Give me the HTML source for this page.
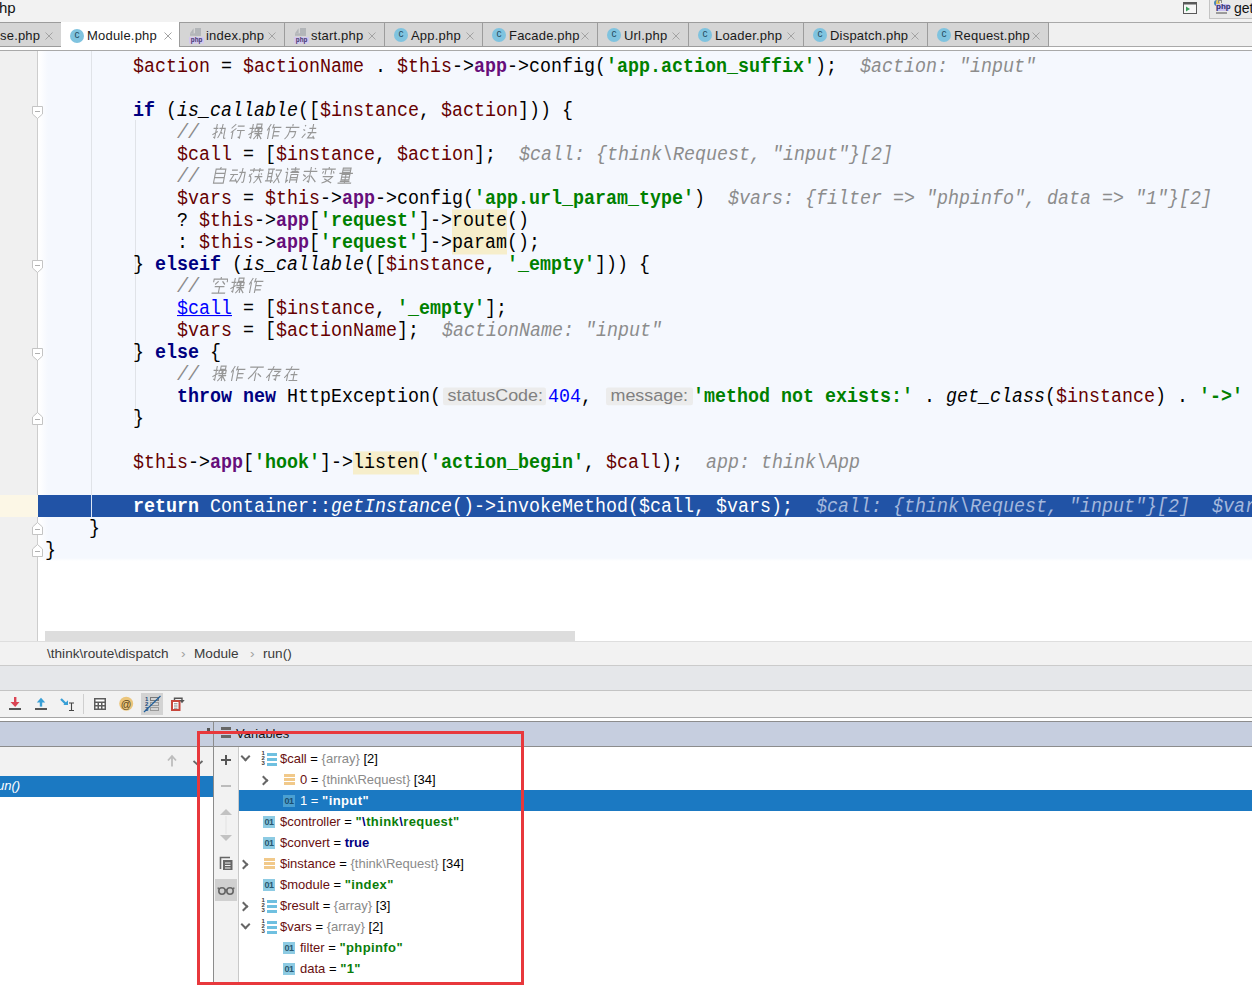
<!DOCTYPE html>
<html><head><meta charset="utf-8">
<style>
*{margin:0;padding:0;box-sizing:border-box}
html,body{width:1252px;height:985px;overflow:hidden;background:#fff;font-family:"Liberation Sans",sans-serif}
.abs{position:absolute}
#top{position:absolute;left:0;top:0;width:1252px;height:22px;background:#f2f2f2}
#tabbar{position:absolute;left:0;top:22px;width:1252px;height:25px;background:#f0f0f0;border-top:1px solid #a9a9a9;border-bottom:1px solid #a9a9a9}
#tabstrip{position:absolute;left:0;top:47px;width:1252px;height:3px;background:#fff}
#tabline{position:absolute;left:0;top:50px;width:1252px;height:1px;background:#a9a9a9}
.tab{position:absolute;top:-1px;height:25px;background:#d5d5d5;border:1px solid #9c9c9c}
.tab.act{background:#fff;border:none;height:28px;top:-1px}
.tab.act .ci{top:7px;left:9px}
.tab.act .tl{top:6px}
.tab.first{border-left:none}
.tl{position:absolute;top:5px;font-size:13px;color:#1a1a1a;white-space:nowrap;letter-spacing:0.2px}
.txs{position:absolute;top:9px;right:8px}
.tab.act .txs{top:10px;right:8px}
.ci{position:absolute;left:9px;top:5px;width:14px;height:14px;border-radius:50%;background:#7fc3df;color:#1f4a5e;font-size:10px;line-height:12px;text-align:center}
.phpi{position:absolute;left:9px;top:5px}
.phpi .pg{position:absolute;left:4px;top:0;width:9px;height:8px;background:#bcbcbc}
.phpi .pt{position:absolute;left:0;top:9px;width:16px;height:7px;background:#cbbbe8;color:#4d3a8a;font-size:7px;line-height:7px;font-weight:bold;text-align:center}
#editor{position:absolute;left:0;top:51px;width:1252px;height:590px;background:#fff;overflow:hidden}
#gutter{position:absolute;left:0;top:51px;width:38px;height:590px;background:#f0f0f0;border-right:1px solid #cdcdcd}
#codebg{position:absolute;left:39px;top:51px;width:1213px;height:510px;background:linear-gradient(to right,#fff 0,#f5f8fe 9px);}
#codebg:after{content:'';position:absolute;left:0;right:0;bottom:0;height:3px;background:linear-gradient(to bottom,rgba(255,255,255,0),#fff)}
#code{position:absolute;left:0;top:51px;width:1252px;height:590px;overflow:hidden}
#code .inner{position:absolute;left:0;top:-51px}
.ln{position:absolute;height:22px;line-height:22px;white-space:pre;transform:scaleY(1.1);transform-origin:0 16px;font-family:"Liberation Mono",monospace;font-size:18.33px;color:#000}
.ln.sel{color:#fff}
.v{color:#660000}.f{color:#660e7a;font-weight:bold}.s{color:#008000;font-weight:bold}.k{color:#000080;font-weight:bold}
.n{color:#0000ff}.c{color:#8a8a8a;font-style:italic}.i{font-style:italic}.h{color:#8c8c8c;font-style:italic;margin-left:1px}
.u{color:#0000ff;text-decoration:underline}
.hl{background:#f6eecb}
.cjs{display:inline-block;vertical-align:-2px}
.cjx{display:inline-block;width:18px;font-family:"Liberation Sans",sans-serif;font-size:15px;color:#a3a3a3;transform:scaleX(1.15) scaleY(1.05)}
.pb{display:inline-block;position:relative;height:16.3px;vertical-align:top;margin-top:1.7px;background:#ececec;border-radius:2px}
.pbt{position:absolute;left:4.5px;top:0.9px;font-family:"Liberation Sans",sans-serif;font-size:17.9px;line-height:17.9px;color:#808080;transform:scaleY(0.83);transform-origin:0 0;white-space:nowrap}
.sel .v,.sel .k,.sel .s,.sel .i{color:#fff}
.sel .h{color:#a4b8dd}
#selrow{position:absolute;left:38px;top:495px;width:1214px;height:22px;background:#2153a6}
#gsel{position:absolute;left:0;top:495px;width:38px;height:22px;background:#fcf7e6}
.guide{position:absolute;width:1px;background:#e0e3e8}
.fold{position:absolute;left:32px;width:11px;height:13px}
#hscroll{position:absolute;left:45px;top:631px;width:530px;height:10px;background:#dddddd}
#crumb{position:absolute;left:0;top:641px;width:1252px;height:25px;background:#f2f2f2;border-bottom:1px solid #cbcbcb;font-size:13.6px;color:#3a3a3a}
#crumb span{position:absolute;top:5px}
#graybar{position:absolute;left:0;top:666px;width:1252px;height:25px;background:#e5e7ea;border-bottom:1px solid #c4c4c4}
#toolbar{position:absolute;left:0;top:691px;width:1252px;height:27px;background:#f2f2f2;border-bottom:1px solid #a6a6a6}
#tbline{position:absolute;left:0;top:721px;width:1252px;height:1px;background:#8c8c8c}
#phead{position:absolute;left:0;top:722px;width:1252px;height:25px;background:#c6cedf;border-bottom:1px solid #8c8c8c}
#frames{position:absolute;left:0;top:747px;width:213px;height:238px;background:#fff}
#ftool{position:absolute;left:0;top:747px;width:213px;height:29px;background:#f2f2f2}
#fsel{position:absolute;left:0;top:776px;width:213px;height:21px;background:#1b79c2}
#vdiv{position:absolute;left:213px;top:722px;width:1px;height:263px;background:#8c8c8c}
#vtool{position:absolute;left:214px;top:747px;width:25px;height:238px;background:#f2f2f2;border-right:1px solid #c9c9c9}
.vr{position:absolute;left:239px;width:1013px;height:21px;font-size:13px;line-height:21px;color:#000}
.vr.sel{background:#1b79c2}
.vt{position:absolute;top:0;white-space:pre}
.vn{color:#680f0f}.vg{color:#8a8a8a}.vs{color:#0a7d0a;font-weight:bold;letter-spacing:0.4px}.vk{color:#000080;font-weight:bold}
.sel .vn,.sel .vs,.sel .vt,.sel .vk{color:#fff}
.i01{position:absolute;top:5px;width:12px;height:12px;background:#8dcbe3;color:#2a5870;font-size:9px;line-height:12px;text-align:center;font-weight:bold;letter-spacing:-0.5px}
.sel .i01{background:#4aa0d2;color:#1b4d6e}
.iarr{position:absolute;top:4px;width:16px;height:15px}
.iarr i{position:absolute;left:-0.5px;top:-1px;font-style:normal;font-size:6px;line-height:4.8px;color:#3a3a3a;font-weight:bold}
.iarr b{position:absolute;left:5px;width:10px;height:3px;background:#6fc0e0}
.iarr b:nth-of-type(1){top:1px}.iarr b:nth-of-type(2){top:6px}.iarr b:nth-of-type(3){top:11px}
.iobj{position:absolute;top:5px;width:11px;height:13px}
.iobj b{position:absolute;left:0;width:11px;height:3px;background:#f1c98a}
.iobj b:nth-of-type(1){top:0}.iobj b:nth-of-type(2){top:4px}.iobj b:nth-of-type(3){top:8px}
.chev{position:absolute;width:7px;height:7px;border-right:2px solid #666;border-bottom:2px solid #666}
.chev.d{transform:rotate(45deg);top:5px}
.chev.r{transform:rotate(-45deg);top:8px}
#redbox{position:absolute;left:197px;top:731px;width:327px;height:254px;border:3px solid #e8383c}
</style></head><body>
<div id="top">
  <span class="abs" style="left:-1px;top:-1px;font-size:15px;color:#111">hp</span>
  <svg class="abs" style="left:1183px;top:2px" width="14" height="12" viewBox="0 0 14 12"><rect x="0.5" y="0.5" width="13" height="11" fill="#f7f7f7" stroke="#5a5a5a"/><rect x="0" y="0" width="14" height="2.5" fill="#5a5a5a"/><path d="M3 4.5L7 7L3 9.5Z" fill="#3aa05a"/></svg>
  <div class="abs" style="left:1209px;top:-1px;width:45px;height:20px;background:#e9e9e9;border:1px solid #c4c4c4">
    <span class="abs" style="left:4px;top:0px;width:6px;height:6px;border-radius:3px;background:#e6c65a;border-left:2px solid #4a86b8"></span>
    <span class="abs" style="left:8px;top:0px;width:4px;height:3px;border:1px solid #8a8a8a;border-bottom:none"></span>
    <span class="abs" style="left:6px;top:4px;width:13px;height:7px;background:#c9bff0"></span>
    <span class="abs" style="left:6px;top:3px;width:13px;font-size:8px;line-height:8px;font-weight:bold;color:#2c2a6a;text-align:center">php</span>
    <span class="abs" style="left:6px;top:12px;width:11px;height:2px;background:#9a9a9a"></span>
    <span class="abs" style="left:24px;top:0px;font-size:14px;color:#111">get</span>
  </div>
</div>
<div id="tabbar">
<div class="tab first" style="left:0px;width:62px"><span class="tl" style="left:0px">se.php</span><svg class="txs" width="8" height="8" viewBox="0 0 8 8"><path d="M0.5 0.5L7.5 7.5M7.5 0.5L0.5 7.5" stroke="#a3a3a3" stroke-width="1"/></svg></div>
<div class="tab act" style="left:61px;width:119px"><span class="ci">c</span><span class="tl" style="left:26px">Module.php</span><svg class="txs" width="8" height="8" viewBox="0 0 8 8"><path d="M0.5 0.5L7.5 7.5M7.5 0.5L0.5 7.5" stroke="#a3a3a3" stroke-width="1"/></svg></div>
<div class="tab" style="left:179px;width:106px"><svg class="phpi" width="16" height="17" viewBox="0 0 16 17"><path d="M1 5.2L4.6 0.3V5.2Z" fill="#b3b6b9"/><rect x="6" y="0" width="6" height="7.8" fill="#b3b6b9"/><rect x="1" y="5.3" width="11" height="2.5" fill="#b3b6b9"/><rect x="0" y="9" width="15" height="6.5" fill="#d3c8ee"/><text x="1.8" y="13.9" textLength="11.5" lengthAdjust="spacingAndGlyphs" font-family="Liberation Sans" font-size="7.6" font-weight="bold" fill="#3f3470">php</text></svg><span class="tl" style="left:26px">index.php</span><svg class="txs" width="8" height="8" viewBox="0 0 8 8"><path d="M0.5 0.5L7.5 7.5M7.5 0.5L0.5 7.5" stroke="#a3a3a3" stroke-width="1"/></svg></div>
<div class="tab" style="left:284px;width:101px"><svg class="phpi" width="16" height="17" viewBox="0 0 16 17"><path d="M1 5.2L4.6 0.3V5.2Z" fill="#b3b6b9"/><rect x="6" y="0" width="6" height="7.8" fill="#b3b6b9"/><rect x="1" y="5.3" width="11" height="2.5" fill="#b3b6b9"/><rect x="0" y="9" width="15" height="6.5" fill="#d3c8ee"/><text x="1.8" y="13.9" textLength="11.5" lengthAdjust="spacingAndGlyphs" font-family="Liberation Sans" font-size="7.6" font-weight="bold" fill="#3f3470">php</text></svg><span class="tl" style="left:26px">start.php</span><svg class="txs" width="8" height="8" viewBox="0 0 8 8"><path d="M0.5 0.5L7.5 7.5M7.5 0.5L0.5 7.5" stroke="#a3a3a3" stroke-width="1"/></svg></div>
<div class="tab" style="left:384px;width:99px"><span class="ci">c</span><span class="tl" style="left:26px">App.php</span><svg class="txs" width="8" height="8" viewBox="0 0 8 8"><path d="M0.5 0.5L7.5 7.5M7.5 0.5L0.5 7.5" stroke="#a3a3a3" stroke-width="1"/></svg></div>
<div class="tab" style="left:482px;width:116px"><span class="ci">c</span><span class="tl" style="left:26px">Facade.php</span><svg class="txs" width="8" height="8" viewBox="0 0 8 8"><path d="M0.5 0.5L7.5 7.5M7.5 0.5L0.5 7.5" stroke="#a3a3a3" stroke-width="1"/></svg></div>
<div class="tab" style="left:597px;width:92px"><span class="ci">c</span><span class="tl" style="left:26px">Url.php</span><svg class="txs" width="8" height="8" viewBox="0 0 8 8"><path d="M0.5 0.5L7.5 7.5M7.5 0.5L0.5 7.5" stroke="#a3a3a3" stroke-width="1"/></svg></div>
<div class="tab" style="left:688px;width:116px"><span class="ci">c</span><span class="tl" style="left:26px">Loader.php</span><svg class="txs" width="8" height="8" viewBox="0 0 8 8"><path d="M0.5 0.5L7.5 7.5M7.5 0.5L0.5 7.5" stroke="#a3a3a3" stroke-width="1"/></svg></div>
<div class="tab" style="left:803px;width:125px"><span class="ci">c</span><span class="tl" style="left:26px">Dispatch.php</span><svg class="txs" width="8" height="8" viewBox="0 0 8 8"><path d="M0.5 0.5L7.5 7.5M7.5 0.5L0.5 7.5" stroke="#a3a3a3" stroke-width="1"/></svg></div>
<div class="tab" style="left:927px;width:122px"><span class="ci">c</span><span class="tl" style="left:26px">Request.php</span><svg class="txs" width="8" height="8" viewBox="0 0 8 8"><path d="M0.5 0.5L7.5 7.5M7.5 0.5L0.5 7.5" stroke="#a3a3a3" stroke-width="1"/></svg></div>

</div>
<div id="tabstrip"></div>
<div id="tabline"></div>
<div id="editor"></div>
<div id="gutter"></div>
<div id="codebg"></div>
<div id="gsel"></div>
<div id="selrow"></div>
<div class="guide" style="left:91px;top:51px;height:466px"></div>
<div class="guide" style="left:135px;top:120px;height:301px"></div>
<div class="abs" style="left:91px;top:495px;width:1px;height:22px;background:#dce6f5"></div>
<div id="code"><div class="inner">
<div class="ln" style="top:57px;left:133px"><span class="v">$action</span> = <span class="v">$actionName</span> . <span class="v">$this</span>-&gt;<span class="f">app</span>-&gt;config(<span class="s">'app.action_suffix'</span>);<span class="h">  $action: "input"</span></div>
<div class="ln" style="top:101px;left:133px"><span class="k">if</span> (<span class="i">is_callable</span>([<span class="v">$instance</span>, <span class="v">$action</span>])) {</div>
<div class="ln" style="top:123px;left:133px"><span class="c">    // <svg class="cjs" width="18" height="16" viewBox="-1 -0.5 18 16.5"><path d="M1 5H6 M4 1V14L2.5 13 M1 11L6 8 M7 5H13V13Q13 15 15 14 M10 1Q10 9 7 14 M9 8L11 10" transform="skewX(-12) translate(2.5 0)" stroke="#979797" stroke-width="1.15" fill="none"/></svg><svg class="cjs" width="18" height="16" viewBox="-1 -0.5 18 16.5"><path d="M5 1L1 5 M6 5L1 9 M3 7V15 M7 3H14 M7 7H15 M11 7V14L9 13" transform="skewX(-12) translate(2.5 0)" stroke="#979797" stroke-width="1.15" fill="none"/></svg><svg class="cjs" width="18" height="16" viewBox="-1 -0.5 18 16.5"><path d="M1 5H6 M4 1V14L2.5 13 M1 11L6 8 M8 1H13V4H8Z M7 5H10V8H7Z M11 5H14V8H11Z M7 10H15 M11 8V15 M11 10L7 15 M11 10L15 15" transform="skewX(-12) translate(2.5 0)" stroke="#979797" stroke-width="1.15" fill="none"/></svg><svg class="cjs" width="18" height="16" viewBox="-1 -0.5 18 16.5"><path d="M4 1L1 7 M3 5V15 M7 1L6 5 M6 4H15 M8 4V15 M8 8H14 M8 12H14" transform="skewX(-12) translate(2.5 0)" stroke="#979797" stroke-width="1.15" fill="none"/></svg><svg class="cjs" width="18" height="16" viewBox="-1 -0.5 18 16.5"><path d="M8 1V3 M1 4H15 M6 4Q6 12 2 15 M6 8H12Q12 14 9 14" transform="skewX(-12) translate(2.5 0)" stroke="#979797" stroke-width="1.15" fill="none"/></svg><svg class="cjs" width="18" height="16" viewBox="-1 -0.5 18 16.5"><path d="M2 2L3 3 M1 6L3 7 M1 14L4 10 M7 5H14 M10.5 1V9 M6 9H15 M10 9L7 14H14 M12 12L14 15" transform="skewX(-12) translate(2.5 0)" stroke="#979797" stroke-width="1.15" fill="none"/></svg></span></div>
<div class="ln" style="top:145px;left:133px">    <span class="v">$call</span> = [<span class="v">$instance</span>, <span class="v">$action</span>];<span class="h">  $call: {think\Request, "input"}[2]</span></div>
<div class="ln" style="top:167px;left:133px"><span class="c">    // <svg class="cjs" width="18" height="16" viewBox="-1 -0.5 18 16.5"><path d="M8 0L7 2 M3 2H13V15H3Z M3 6H13 M3 10H13" transform="skewX(-12) translate(2.5 0)" stroke="#979797" stroke-width="1.15" fill="none"/></svg><svg class="cjs" width="18" height="16" viewBox="-1 -0.5 18 16.5"><path d="M1 3H7 M0 7H8 M4 7L1 13H7 M6 11L8 14 M9 5H15V13Q15 15 13 14 M12 1Q12 10 8 15" transform="skewX(-12) translate(2.5 0)" stroke="#979797" stroke-width="1.15" fill="none"/></svg><svg class="cjs" width="18" height="16" viewBox="-1 -0.5 18 16.5"><path d="M1 3H15 M5 1V5 M11 1V5 M4 6L1 9 M1 7Q5 10 3 15 M7 9H15 M11 6V9Q10 13 7 15 M11 9L15 15 M13 6L14 7" transform="skewX(-12) translate(2.5 0)" stroke="#979797" stroke-width="1.15" fill="none"/></svg><svg class="cjs" width="18" height="16" viewBox="-1 -0.5 18 16.5"><path d="M1 2H8 M2 2V13 M6 2V15 M2 6H6 M2 9H6 M0 13H8 M9 3H15Q13 10 9 15 M10 6L15 15" transform="skewX(-12) translate(2.5 0)" stroke="#979797" stroke-width="1.15" fill="none"/></svg><svg class="cjs" width="18" height="16" viewBox="-1 -0.5 18 16.5"><path d="M2 1L3 3 M1 5H3V14L5 12 M6 2H15 M10.5 0V5 M7 4H14 M6 5H15 M7 7H14V15 M7 7V15 M7 10H14 M7 12H14" transform="skewX(-12) translate(2.5 0)" stroke="#979797" stroke-width="1.15" fill="none"/></svg><svg class="cjs" width="18" height="16" viewBox="-1 -0.5 18 16.5"><path d="M1 4H15 M8 0V14L6 13 M12 1L13 2 M1 7L4 9 M2 13L7 8 M9 8L15 14" transform="skewX(-12) translate(2.5 0)" stroke="#979797" stroke-width="1.15" fill="none"/></svg><svg class="cjs" width="18" height="16" viewBox="-1 -0.5 18 16.5"><path d="M8 0V2 M1 2H15 M5 2V7 M11 2V7 M3 4L2 6 M13 4L14 6 M3 9H13Q10 13 3 15 M5 11L13 15" transform="skewX(-12) translate(2.5 0)" stroke="#979797" stroke-width="1.15" fill="none"/></svg><svg class="cjs" width="18" height="16" viewBox="-1 -0.5 18 16.5"><path d="M4 1H12V5H4Z M4 3H12 M1 6H15 M4 7H12V12H4Z M4 9.5H12 M8 7V15 M3 13.5H13 M1 15H15" transform="skewX(-12) translate(2.5 0)" stroke="#979797" stroke-width="1.15" fill="none"/></svg></span></div>
<div class="ln" style="top:189px;left:133px">    <span class="v">$vars</span> = <span class="v">$this</span>-&gt;<span class="f">app</span>-&gt;config(<span class="s">'app.url_param_type'</span>)<span class="h">  $vars: {filter =&gt; "phpinfo", data =&gt; "1"}[2]</span></div>
<div class="ln" style="top:211px;left:133px">    ? <span class="v">$this</span>-&gt;<span class="f">app</span>[<span class="s">'request'</span>]-&gt;<span class="hl">route</span>()</div>
<div class="ln" style="top:233px;left:133px">    : <span class="v">$this</span>-&gt;<span class="f">app</span>[<span class="s">'request'</span>]-&gt;<span class="hl">param</span>();</div>
<div class="ln" style="top:255px;left:133px">} <span class="k">elseif</span> (<span class="i">is_callable</span>([<span class="v">$instance</span>, <span class="s">'_empty'</span>])) {</div>
<div class="ln" style="top:277px;left:133px"><span class="c">    // <svg class="cjs" width="18" height="16" viewBox="-1 -0.5 18 16.5"><path d="M8 0V2 M1 5V2H15V5 M6 4L3 7 M10 4L13 7 M3 9H13 M8 9V15 M1 15H15" transform="skewX(-12) translate(2.5 0)" stroke="#979797" stroke-width="1.15" fill="none"/></svg><svg class="cjs" width="18" height="16" viewBox="-1 -0.5 18 16.5"><path d="M1 5H6 M4 1V14L2.5 13 M1 11L6 8 M8 1H13V4H8Z M7 5H10V8H7Z M11 5H14V8H11Z M7 10H15 M11 8V15 M11 10L7 15 M11 10L15 15" transform="skewX(-12) translate(2.5 0)" stroke="#979797" stroke-width="1.15" fill="none"/></svg><svg class="cjs" width="18" height="16" viewBox="-1 -0.5 18 16.5"><path d="M4 1L1 7 M3 5V15 M7 1L6 5 M6 4H15 M8 4V15 M8 8H14 M8 12H14" transform="skewX(-12) translate(2.5 0)" stroke="#979797" stroke-width="1.15" fill="none"/></svg></span></div>
<div class="ln" style="top:299px;left:133px">    <span class="u">$call</span> = [<span class="v">$instance</span>, <span class="s">'_empty'</span>];</div>
<div class="ln" style="top:321px;left:133px">    <span class="v">$vars</span> = [<span class="v">$actionName</span>];<span class="h">  $actionName: "input"</span></div>
<div class="ln" style="top:343px;left:133px">} <span class="k">else</span> {</div>
<div class="ln" style="top:365px;left:133px"><span class="c">    // <svg class="cjs" width="18" height="16" viewBox="-1 -0.5 18 16.5"><path d="M1 5H6 M4 1V14L2.5 13 M1 11L6 8 M8 1H13V4H8Z M7 5H10V8H7Z M11 5H14V8H11Z M7 10H15 M11 8V15 M11 10L7 15 M11 10L15 15" transform="skewX(-12) translate(2.5 0)" stroke="#979797" stroke-width="1.15" fill="none"/></svg><svg class="cjs" width="18" height="16" viewBox="-1 -0.5 18 16.5"><path d="M4 1L1 7 M3 5V15 M7 1L6 5 M6 4H15 M8 4V15 M8 8H14 M8 12H14" transform="skewX(-12) translate(2.5 0)" stroke="#979797" stroke-width="1.15" fill="none"/></svg><svg class="cjs" width="18" height="16" viewBox="-1 -0.5 18 16.5"><path d="M1 2H15 M9 2Q6 9 1 13 M8 7V15 M10 8L14 11" transform="skewX(-12) translate(2.5 0)" stroke="#979797" stroke-width="1.15" fill="none"/></svg><svg class="cjs" width="18" height="16" viewBox="-1 -0.5 18 16.5"><path d="M1 4H15 M7 1Q5 8 1 12 M4 8V15 M8 6H14L11 9V14L9 13 M7 10H15" transform="skewX(-12) translate(2.5 0)" stroke="#979797" stroke-width="1.15" fill="none"/></svg><svg class="cjs" width="18" height="16" viewBox="-1 -0.5 18 16.5"><path d="M1 4H15 M7 1Q5 8 1 12 M4 8V15 M7 9H14 M10.5 6V14 M6 14.5H15" transform="skewX(-12) translate(2.5 0)" stroke="#979797" stroke-width="1.15" fill="none"/></svg></span></div>
<div class="ln" style="top:387px;left:133px">    <span class="k">throw</span> <span class="k">new</span> HttpException(<span class="pb" style="width:103px;margin-left:2px;margin-right:2px"><span class="pbt">statusCode:</span></span><span class="n">404</span>, <span class="pb" style="width:87px;margin-left:3px;margin-right:0px"><span class="pbt">message:</span></span><span class="s">'method not exists:'</span> . <span class="i">get_class</span>(<span class="v">$instance</span>) . <span class="s">'-&gt;'</span> . <span class="v">$action</span>, 404);</div>
<div class="ln" style="top:409px;left:133px">}</div>
<div class="ln" style="top:453px;left:133px"><span class="v">$this</span>-&gt;<span class="f">app</span>[<span class="s">'hook'</span>]-&gt;<span class="hl">listen</span>(<span class="s">'action_begin'</span>, <span class="v">$call</span>);<span class="h">  app: think\App</span></div>
<div class="ln sel" style="top:497px;left:133px"><span class="k">return</span> Container::<span class="i">getInstance</span>()-&gt;invokeMethod(<span class="v">$call</span>, <span class="v">$vars</span>);<span class="h">  $call: {think\Request, "input"}[2]  $vars: {filter =&gt; "phpinfo", data =&gt; "1"}[2]</span></div>
<div class="ln" style="top:519px;left:89px">}</div>
<div class="ln" style="top:541px;left:45px">}</div>

</div></div>
<svg class="fold" style="top:106px" viewBox="0 0 11 13"><path d="M0.5 0.5H10.5V8L5.5 12.5L0.5 8Z" fill="#fff" stroke="#c4c4c4"/><path d="M3 5.5H8" stroke="#b0b0b0"/></svg>
<svg class="fold" style="top:260px" viewBox="0 0 11 13"><path d="M0.5 0.5H10.5V8L5.5 12.5L0.5 8Z" fill="#fff" stroke="#c4c4c4"/><path d="M3 5.5H8" stroke="#b0b0b0"/></svg>
<svg class="fold" style="top:348px" viewBox="0 0 11 13"><path d="M0.5 0.5H10.5V8L5.5 12.5L0.5 8Z" fill="#fff" stroke="#c4c4c4"/><path d="M3 5.5H8" stroke="#b0b0b0"/></svg>
<svg class="fold" style="top:412px" viewBox="0 0 11 13"><path d="M0.5 12.5H10.5V5L5.5 0.5L0.5 5Z" fill="#fff" stroke="#c4c4c4"/><path d="M3 7.5H8" stroke="#b0b0b0"/></svg>
<svg class="fold" style="top:522px" viewBox="0 0 11 13"><path d="M0.5 12.5H10.5V5L5.5 0.5L0.5 5Z" fill="#fff" stroke="#c4c4c4"/><path d="M3 7.5H8" stroke="#b0b0b0"/></svg>
<svg class="fold" style="top:544px" viewBox="0 0 11 13"><path d="M0.5 12.5H10.5V5L5.5 0.5L0.5 5Z" fill="#fff" stroke="#c4c4c4"/><path d="M3 7.5H8" stroke="#b0b0b0"/></svg>
<div id="hscroll"></div>
<div id="crumb"><span style="left:47px">\think\route\dispatch</span><span style="left:181px;color:#a0a0a0">›</span><span style="left:194px">Module</span><span style="left:250px;color:#a0a0a0">›</span><span style="left:263px">run()</span></div>
<div class="abs" style="left:0;top:641px;width:1252px;height:1px;background:#dedede"></div>
<div id="graybar"></div>
<div id="toolbar"></div>
<svg class="abs" style="left:0;top:691px" width="200" height="27" viewBox="0 691 200 27">
  <!-- red step down -->
  <rect x="14" y="697" width="2.4" height="6" fill="#db4453"/>
  <path d="M10.5 702 H19.5 L15.2 707 Z" fill="#db4453"/>
  <rect x="9" y="708" width="12" height="2" fill="#555"/>
  <!-- blue step up -->
  <path d="M36.8 702.6 H45.2 L41 697.8 Z" fill="#389fd6"/>
  <rect x="39.8" y="702" width="2.4" height="4.6" fill="#389fd6"/>
  <rect x="35" y="708" width="12" height="2" fill="#555"/>
  <!-- step into cursor -->
  <path d="M61 699 L66 704" stroke="#389fd6" stroke-width="2.2"/>
  <path d="M63.3 705 H68 V700.3 Z" fill="#389fd6"/>
  <path d="M69 703 H74 M71.5 703 V710.5 M69 710.5 H74" stroke="#444" stroke-width="1.1" fill="none"/>
  <rect x="83" y="694" width="1" height="20" fill="#cfcfcf"/>
  <!-- calculator -->
  <rect x="94" y="698" width="12" height="12" fill="#5d5d5d"/>
  <rect x="95.5" y="699.5" width="9" height="2" fill="#fff"/>
  <rect x="95.5" y="703" width="2" height="2" fill="#fff"/><rect x="99" y="703" width="2" height="2" fill="#fff"/><rect x="102.5" y="703" width="2" height="2" fill="#fff"/>
  <rect x="95.5" y="706.5" width="2" height="2" fill="#fff"/><rect x="99" y="706.5" width="2" height="2" fill="#fff"/><rect x="102.5" y="706.5" width="2" height="2" fill="#fff"/>
  <!-- @ -->
  <circle cx="126.2" cy="703.8" r="7" fill="#ebc57b"/>
  <text x="126.2" y="707.6" text-anchor="middle" font-family="Liberation Sans" font-size="10.5" fill="#5a4418">@</text>
  <!-- toggled list -->
  <rect x="141" y="693" width="22" height="22" fill="#d3d3d3"/>
  <text x="145" y="701" font-size="6" font-family="Liberation Sans" font-weight="bold" fill="#234a7a">1</text>
  <text x="145" y="706" font-size="6" font-family="Liberation Sans" font-weight="bold" fill="#234a7a">2</text>
  <text x="145" y="711" font-size="6" font-family="Liberation Sans" font-weight="bold" fill="#234a7a">3</text>
  <rect x="150.5" y="697.5" width="8" height="3" fill="none" stroke="#7a7a7a"/>
  <rect x="150.5" y="702.5" width="8" height="3" fill="none" stroke="#9a9a9a"/>
  <rect x="150.5" y="707.5" width="8" height="3" fill="none" stroke="#9a9a9a"/>
  <path d="M144 712 L160.5 696" stroke="#1f5f9a" stroke-width="1.2"/>
  <!-- red copy -->
  <rect x="171" y="700" width="9.5" height="11" fill="#c8463c"/>
  <rect x="173" y="702" width="5.5" height="7" fill="#fff"/>
  <path d="M174 703.8H177.5 M174 706H177.5 M174 708.2H177.5" stroke="#666" stroke-width="0.8"/>
  <path d="M174.5 700V698.2H182V700.5" stroke="#555" stroke-width="1.4" fill="none"/>
  <path d="M179.3 700H184.7L182 703.2Z" fill="#555"/>
</svg>
<div id="tbline"></div>
<div id="phead">
  <span class="abs" style="left:207px;top:6px;width:3px;height:5px;background:#555"></span>
  <span class="abs" style="left:221px;top:5px;width:10px;height:3px;background:#666"></span>
  <span class="abs" style="left:221px;top:9px;width:10px;height:3px;background:#666"></span>
  <span class="abs" style="left:221px;top:13px;width:10px;height:3px;background:#666"></span>
  <span class="abs" style="left:236px;top:4px;font-size:13px;color:#111">Variables</span>
</div>
<div id="frames"></div>
<div id="ftool"></div>
<svg class="abs" style="left:160px;top:750px" width="50" height="22" viewBox="160 750 50 22">
  <path d="M172 766.5 V756.5 M168 760.5 L172 756 L176 760.5" stroke="#bdbdbd" stroke-width="1.8" fill="none"/>
  <path d="M193.5 761 L198 765 L202.5 761" stroke="#666" stroke-width="1.8" fill="none"/>
</svg>
<div id="fsel"><span class="abs" style="left:-3px;top:2px;font-size:13px;color:#fff;font-style:italic">un()</span></div>
<div id="vdiv"></div>
<div id="vtool"></div>
<svg class="abs" style="left:214px;top:747px" width="25" height="238" viewBox="214 747 25 238">
  <path d="M221 760 H231 M226 755 V765" stroke="#555" stroke-width="2"/>
  <path d="M221 786 H231" stroke="#bcbcbc" stroke-width="2"/>
  <path d="M220 815 L226 809 L232 815 Z" fill="#c2c2c2"/>
  <path d="M226 816 V834" stroke="#e2e2e2" stroke-width="1"/>
  <path d="M220 835 L226 841 L232 835 Z" fill="#c2c2c2"/>
  <path d="M220.5 869 V857.5 H230" stroke="#666" stroke-width="1.6" fill="none"/>
  <rect x="223" y="860" width="9.5" height="10" fill="#666"/>
  <path d="M225 863 H230.5 M225 865.5 H230.5 M225 868 H230.5" stroke="#f2f2f2" stroke-width="1"/>
  <rect x="215" y="879" width="22" height="22" fill="#d0d0d0"/>
  <circle cx="222" cy="891" r="3.2" fill="none" stroke="#666" stroke-width="1.6"/>
  <circle cx="230" cy="891" r="3.2" fill="none" stroke="#666" stroke-width="1.6"/>
  <path d="M225 890 H227 M218.5 889 L218 887.5 M233.5 889 L234 887.5" stroke="#666" stroke-width="1.4"/>
</svg>
<div class="vr" style="top:748px"><span class="chev d" style="left:3px"></span><span class="iarr" style="left:23px"><i>1<br>2<br>3</i><b></b><b></b><b></b></span><span class="vt" style="left:41px"><span class="vn">$call</span> = <span class="vg">{array}</span><span class="vb"> [2]</span></span></div>
<div class="vr" style="top:769px"><span class="chev r" style="left:21px"></span><span class="iobj" style="left:45px"><b></b><b></b><b></b></span><span class="vt" style="left:61px"><span class="vn">0</span> = <span class="vg">{think\Request}</span><span class="vb"> [34]</span></span></div>
<div class="vr sel" style="top:790px"><span class="i01" style="left:44px">01</span><span class="vt" style="left:61px"><span class="vn">1</span> = <span class="vs">"input"</span></span></div>
<div class="vr" style="top:811px"><span class="i01" style="left:24px">01</span><span class="vt" style="left:41px"><span class="vn">$controller</span> = <span class="vs">"<span class="vk">\</span>think<span class="vk">\</span>request"</span></span></div>
<div class="vr" style="top:832px"><span class="i01" style="left:24px">01</span><span class="vt" style="left:41px"><span class="vn">$convert</span> = <span class="vk">true</span></span></div>
<div class="vr" style="top:853px"><span class="chev r" style="left:1px"></span><span class="iobj" style="left:25px"><b></b><b></b><b></b></span><span class="vt" style="left:41px"><span class="vn">$instance</span> = <span class="vg">{think\Request}</span><span class="vb"> [34]</span></span></div>
<div class="vr" style="top:874px"><span class="i01" style="left:24px">01</span><span class="vt" style="left:41px"><span class="vn">$module</span> = <span class="vs">"index"</span></span></div>
<div class="vr" style="top:895px"><span class="chev r" style="left:1px"></span><span class="iarr" style="left:23px"><i>1<br>2<br>3</i><b></b><b></b><b></b></span><span class="vt" style="left:41px"><span class="vn">$result</span> = <span class="vg">{array}</span><span class="vb"> [3]</span></span></div>
<div class="vr" style="top:916px"><span class="chev d" style="left:3px"></span><span class="iarr" style="left:23px"><i>1<br>2<br>3</i><b></b><b></b><b></b></span><span class="vt" style="left:41px"><span class="vn">$vars</span> = <span class="vg">{array}</span><span class="vb"> [2]</span></span></div>
<div class="vr" style="top:937px"><span class="i01" style="left:44px">01</span><span class="vt" style="left:61px"><span class="vn">filter</span> = <span class="vs">"phpinfo"</span></span></div>
<div class="vr" style="top:958px"><span class="i01" style="left:44px">01</span><span class="vt" style="left:61px"><span class="vn">data</span> = <span class="vs">"1"</span></span></div>

<div id="redbox"></div>
</body></html>
